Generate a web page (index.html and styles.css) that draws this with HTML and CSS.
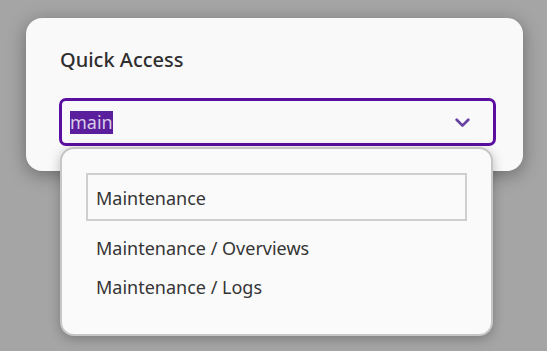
FILE: index.html
```
<!DOCTYPE html>
<html>
<head>
<meta charset="utf-8">
<link rel="stylesheet" href="styles.css">
</head>
<body>
<div class="card">
  <h2 class="title">Quick Access</h2>
  <div class="select-wrap">
    <div class="select">
      <span class="value"><span class="sel">main</span></span>
      <svg class="chev" width="15" height="10" viewBox="0 0 15 10"><path d="M1.7 1.7 L7.5 7.6 L13.3 1.7" fill="none" stroke="#6742a3" stroke-width="2.7" stroke-linecap="round" stroke-linejoin="round"/></svg>
    </div>
    <ul class="menu">
      <li class="item active">Maintenance</li>
      <li class="item">Maintenance / Overviews</li>
      <li class="item">Maintenance / Logs</li>
    </ul>
  </div>
</div>
</body>
</html>
```
FILE: styles.css
```
html, body {
  margin: 0;
  padding: 0;
}
body {
  width: 547px;
  height: 351px;
  background: #a5a5a5;
  font-family: "Noto Sans", "Open Sans", sans-serif;
  color: #333;
  overflow: hidden;
  padding: 18px 0 0 26px;
  box-sizing: border-box;
}
.card {
  width: 497px;
  height: 153px;
  box-sizing: border-box;
  background: #f9f9f9;
  border-radius: 16px;
  box-shadow: 0 4px 18px rgba(0, 0, 0, 0.35);
  padding: 29px 27px 0 33px;
}
.title {
  margin: 0 0 0 1px;
  font-size: 20px;
  font-weight: 500;
  line-height: 26px;
  color: #2f2f2f;
}
.select-wrap {
  position: relative;
  margin-top: 25px;
}
.select {
  height: 48px;
  box-sizing: border-box;
  border: 3px solid #5b0fa0;
  border-radius: 7px;
  display: flex;
  align-items: center;
  justify-content: space-between;
  padding: 0 23px 0 8px;
  background: #f9f9f9;
}
.value {
  font-size: 18px;
  line-height: 23px;
}
.sel {
  background: #5b1e9c;
  color: #d8cde8;
  display: inline-block;
  line-height: 23px;
}
.chev {
  display: block;
  margin-top: 1px;
}
.menu {
  position: absolute;
  top: 49px;
  left: 1px;
  width: 433px;
  height: 189px;
  box-sizing: border-box;
  margin: 0;
  list-style: none;
  background: #fafafa;
  border: 2px solid #c6c6c6;
  border-radius: 14px;
  box-shadow: 0 3px 12px rgba(0, 0, 0, 0.25);
  padding: 24px 24px 0 24px;
  display: flex;
  flex-direction: column;
}
.item {
  font-size: 18px;
  line-height: 23px;
  padding: 0 10px;
  height: 39px;
  display: flex;
  align-items: center;
  color: #353535;
}
.item.active {
  height: 48px;
  box-sizing: border-box;
  border: 2px solid #cfcfcf;
  padding: 3px 8px 0;
  margin-bottom: 8px;
}
```
